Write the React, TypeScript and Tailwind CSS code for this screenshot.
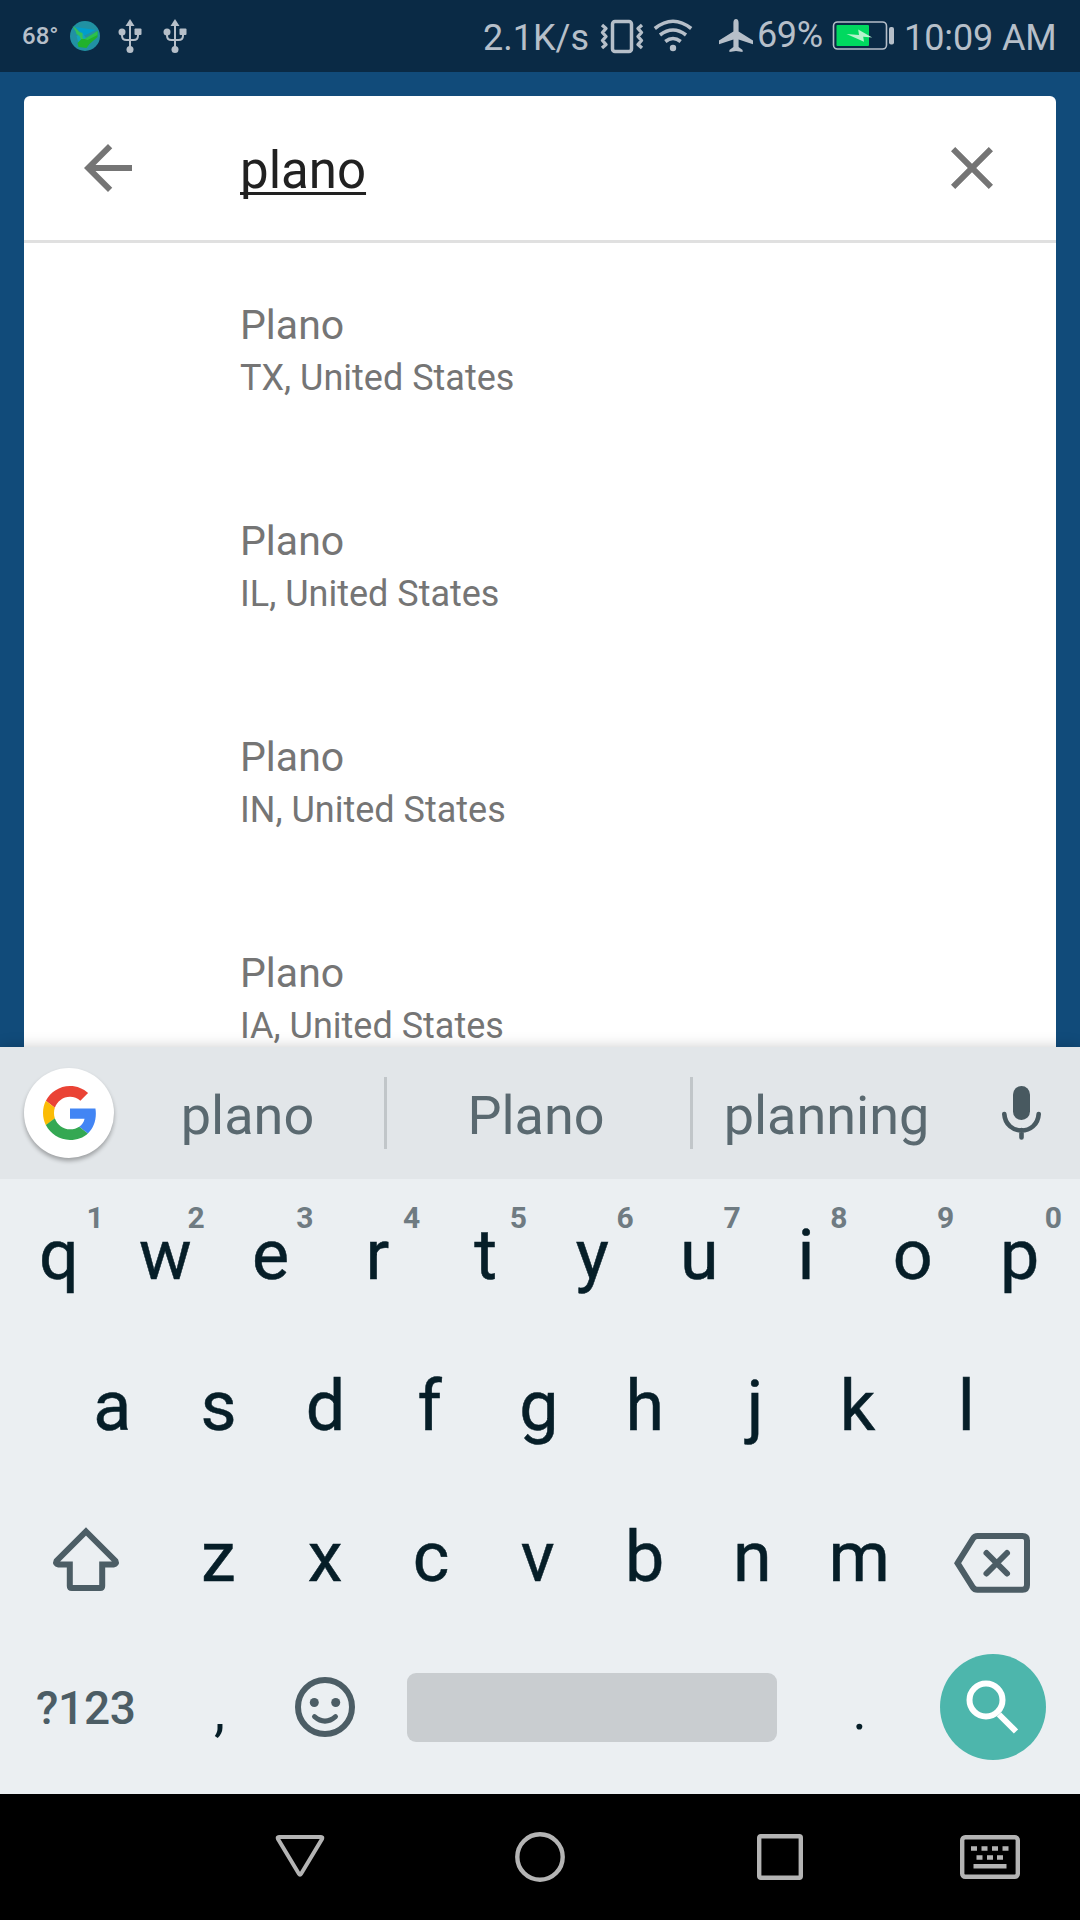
import React from "react";

const statusFg = "#b6bfc9";

function Globe() {
  return (
    <svg className="ml-[12px] h-[32px] w-[32px] shrink-0" viewBox="69.5 20 32 32">
      <circle cx="85.5" cy="36" r="15" fill="#2191a3" />
      <path d="M76 27l20 3-12 6z" fill="#009ecb" />
      <path d="M77 36l6-3 4 6-8 4z" fill="#12a5bc" />
      <path d="M73 26l3 2 4 4 3 1 0 4 2 4-3 0-2-5-3-2-1-3z" fill="#32c15c" />
      <path d="M98 31v6l-8 7-3 4-8-1-1-4 4-4 6 0z" fill="#21b22b" />
      <path d="M98 31v4l-10 5-3-1z" fill="#2cc04e" />
    </svg>
  );
}

function Usb({ className }: { className: string }) {
  return (
    <svg className={className} viewBox="0 0 24 34">
      <path d="M12 0l4.500 7h-9z" fill={statusFg} />
      <path d="M12 5v25M4 13v3.500q0 4.500 4.500 4.500h7q4.500 0 4.500-4.500v-3.500" fill="none" stroke={statusFg} strokeWidth="2" />
      <circle cx="4" cy="13" r="3.500" fill={statusFg} />
      <rect x="16.500" y="9.500" width="7" height="6.500" rx="1" fill={statusFg} />
      <circle cx="12" cy="30.500" r="3.500" fill={statusFg} />
    </svg>
  );
}

function StatusBar() {
  return (
    <div className="flex h-[72px] items-center bg-[#0a2a45] text-[#b6bfc9]">
      <span className="ml-[22px] w-[35px] text-[24px] leading-[32px] font-medium">68°</span>
      <Globe />
      <Usb className="ml-[17px] h-[34px] w-[24px]" />
      <Usb className="ml-[21px] h-[34px] w-[24px]" />
      <div className="ml-auto flex h-full items-center">
        <span className="w-[117px] pt-[3px] text-[36px] leading-[42px] whitespace-nowrap">2.1K/s</span>
        <svg className="h-[36px] w-[44px]" viewBox="601 18 44 36">
          <rect x="613.500" y="21.500" width="19" height="30" rx="2.500" fill="none" stroke={statusFg} strokeWidth="3.500" />
          <path d="M603 25l4 3.500-3.500 4 3.500 4-3.500 4 3.500 4-4 3.500M643 25l-4 3.500 3.500 4-3.500 4 3.500 4-3.500 4 4 3.500" fill="none" stroke={statusFg} strokeWidth="3.400" strokeLinejoin="round" />
        </svg>
        <svg className="ml-[8px] h-[36px] w-[42px]" viewBox="652 18 42 36">
          <g fill="none" stroke={statusFg} strokeWidth="3.600">
            <path d="M654.800 28.500q18.200-14.500 36.400 0" />
            <path d="M660 35q13-10 26 0" />
            <path d="M665.300 41.500q7.700-6 15.400 0" />
          </g>
          <circle cx="673" cy="48" r="3.200" fill={statusFg} />
        </svg>
        <svg className="ml-[24px] h-[36px] w-[36px]" viewBox="718 18 36 36">
          <path d="M736 19q2.600 0 2.600 4v8.500L753 40.500v3.700L738.600 39.500v7.500l4 3v2l-6.600-1-6.600 1v-2l4-3v-7.500L719 44.200v-3.700L733.400 31.500V23q0-4 2.600-4z" fill={statusFg} />
        </svg>
        <span className="ml-[3px] w-[67px] pb-[2px] text-[36px] leading-[42px] whitespace-nowrap tracking-[-0.4px]">69%</span>
        <svg className="ml-[8px] h-[32px] w-[64px]" viewBox="832 20 64 32">
          <rect x="833.500" y="22" width="53" height="27" rx="4" fill="none" stroke={statusFg} strokeWidth="1.600" />
          <rect x="889" y="27" width="5" height="17.500" rx="2" fill={statusFg} />
          <rect x="836.500" y="25" width="32.500" height="21" rx="1" fill="#00d95f" />
          <path d="M846.500 34l12.500 1-.8-5.500 14 8-9-.8.8 5z" fill="#b5f4cd" />
        </svg>
        <span className="ml-[8px] w-[176px] pt-[3px] text-[36px] leading-[42px] tracking-[-0.1px] whitespace-nowrap">10:09 AM</span>
      </div>
    </div>
  );
}

const results = ["TX, United States", "IL, United States", "IN, United States", "IA, United States"];

function SearchCard() {
  return (
    <div className="mx-[24px] mt-[24px] h-[951px] overflow-hidden rounded-t-[6px] bg-white">
      <div className="flex h-[147px] border-b-[3px] border-[#e0e0e0] pt-[36px]">
        <svg className="ml-[48px] h-[72px] w-[72px]" viewBox="0 0 24 24" fill="#757575">
          <path d="M20 11H7.830l5.590-5.590L12 4l-8 8 8 8 1.410-1.410L7.830 13H20v-2z" />
        </svg>
        <div className="ml-[96px] flex-1 pt-[9px] text-[51px] leading-[60px] text-[#212121] underline decoration-[3px] underline-offset-[4px] [text-decoration-skip-ink:none]">
          plano
        </div>
        <svg className="mr-[48px] h-[72px] w-[72px]" viewBox="0 0 24 24" fill="#757575">
          <path d="M19 6.410L17.590 5 12 10.590 6.410 5 5 6.410 10.590 12 5 17.590 6.410 19 12 13.410 17.590 19 19 17.590 13.410 12z" />
        </svg>
      </div>
      {results.map((place) => (
        <div key={place} className="h-[216px] pt-[58px] pl-[216px] text-[#757575]">
          <div className="text-[41px] leading-[48px]">Plano</div>
          <div className="mt-[8px] text-[36px] leading-[42px]">{place}</div>
        </div>
      ))}
    </div>
  );
}

function SuggestionStrip() {
  return (
    <div className="flex h-[132px] items-center bg-[#e2e6e9] text-[54px] leading-[64px] text-[#5a6970]">
      <div className="ml-[24px] flex h-[90px] w-[90px] items-center justify-center rounded-full bg-white pl-[1px] shadow-[0_3px_4px_rgba(0,0,0,0.3)]">
        <svg className="h-[54px] w-[54px]" viewBox="0 0 48 48">
          <path fill="#EA4335" d="M24 9.500c3.540 0 6.710 1.220 9.210 3.600l6.850-6.850C35.900 2.380 30.470 0 24 0 14.620 0 6.510 5.380 2.560 13.220l7.980 6.190C12.430 13.720 17.740 9.500 24 9.500z" />
          <path fill="#4285F4" d="M46.980 24.550c0-1.570-.15-3.090-.38-4.550H24v9.020h12.940c-.58 2.960-2.260 5.480-4.780 7.180l7.730 6c4.510-4.180 7.090-10.360 7.090-17.650z" />
          <path fill="#FBBC05" d="M10.530 28.590c-.48-1.450-.76-2.990-.76-4.590s.27-3.140.76-4.590l-7.980-6.190C.92 16.460 0 20.120 0 24c0 3.880.92 7.540 2.560 10.780l7.970-6.190z" />
          <path fill="#34A853" d="M24 48c6.480 0 11.930-2.130 15.890-5.810l-7.730-6c-2.150 1.450-4.920 2.300-8.160 2.300-6.260 0-11.570-4.220-13.470-9.910l-7.980 6.190C6.510 42.620 14.620 48 24 48z" />
        </svg>
      </div>
      <div className="w-[270px] pt-[6px] pr-[3px] text-center">plano</div>
      <div className="h-[72px] w-[3px] bg-[#c1c6c9]" />
      <div className="w-[303px] pt-[6px] pr-[5px] text-center">Plano</div>
      <div className="h-[72px] w-[3px] bg-[#c1c6c9]" />
      <div className="w-[267px] pt-[6px] text-center">planning</div>
      <svg className="ml-[42px] h-[54px] w-[39px]" viewBox="0 0 39 54">
        <rect x="11" y="0" width="17" height="34" rx="8.500" fill="#485960" />
        <path d="M2.300 28c1.500 22 33 22 34.400 0M19.500 44v7.500" fill="none" stroke="#485960" strokeWidth="4.600" strokeLinecap="round" />
      </svg>
    </div>
  );
}

/* Optical centring: right padding shifts a glyph left by half its value. */
const glyphPadding: Record<string, string> = {
  q: "pr-[1px]",
  a: "pr-[1px]",
  e: "pr-[5px]",
  r: "pr-[5px]",
  f: "pr-[7px]",
  k: "pr-[6px]",
  h: "pr-[4px]",
  b: "pr-[4px]",
  c: "pr-[4px]",
  v: "pr-[4px]",
  j: "pl-[3px]",
};

const hintOffset: Record<string, string> = {
  "1": "right-[9px]",
  "2": "right-[15px]",
  "0": "right-[12px]",
};

function Letter({ children, hint }: { children: string; hint?: string }) {
  return (
    <div className={`relative flex h-full w-[106.8px] items-center justify-center ${glyphPadding[children] ?? "pr-[2px]"}`}>
      {children}
      {hint && (
        <span className={`absolute top-[21px] text-[30px] leading-[36px] font-bold text-[#6f7b82] [-webkit-text-stroke:0px] ${hintOffset[hint] ?? "right-[13px]"}`}>
          {hint}
        </span>
      )}
    </div>
  );
}

function Keyboard() {
  return (
    <div className="h-[615px] bg-[#ebeff2] text-[70px] leading-[84px] text-[#061e28]">
      <div className="flex h-[151px] justify-center [-webkit-text-stroke:0.5px_#061e28]">
        {"qwertyuiop".split("").map((c, i) => (
          <Letter key={c} hint={String((i + 1) % 10)}>{c}</Letter>
        ))}
      </div>
      <div className="flex h-[151px] justify-center [-webkit-text-stroke:0.5px_#061e28]">
        {"asdfghjkl".split("").map((c) => (
          <Letter key={c}>{c}</Letter>
        ))}
      </div>
      <div className="flex h-[151px] items-center">
        <svg className="mt-[4px] ml-[52px] h-[66px] w-[68px]" viewBox="52 1526 68 66" fill="none" stroke="#4c5d65" strokeWidth="6">
          <path d="M86 1531.500l29.500 29.500q1.500 3-2 3.500h-11.300v21.500q0 2-2 2h-28.400q-2 0-2-2v-21.500h-11.300q-3.500-.5-2-3.500z" />
        </svg>
        <div className="ml-[46px] flex h-full [-webkit-text-stroke:0.5px_#061e28]">
          {"zxcvbnm".split("").map((c) => (
            <Letter key={c}>{c}</Letter>
          ))}
        </div>
        <svg className="ml-[40px] mt-[12px] h-[60px] w-[76px]" viewBox="0 0 76 60" fill="none" stroke="#4c5d65" strokeWidth="6">
          <path d="M3.600 30.200L19 5.500Q20.500 3 23.500 3H68.500Q73 3 73 7.500V52Q73 56.700 68.500 56.700H23.500Q20.500 56.700 19 54.500z" />
          <path d="M32.500 20l20.500 20.500M53 20L32.500 40.500" strokeLinecap="round" />
        </svg>
      </div>
      <div className="flex h-[151px] items-center pb-[2px]">
        <div className="ml-[36px] w-[130px] pt-[3px] text-[46px] leading-[54px] font-medium tracking-[-0.3px] text-[#4c5d65]">?123</div>
        <div className="w-[107px] pt-[9px] text-center text-[56px]">,</div>
        <svg className="ml-[22px] h-[60px] w-[60px]" viewBox="0 0 60 60">
          <circle cx="30" cy="30" r="27" fill="none" stroke="#4c5d65" strokeWidth="6" />
          <circle cx="19.300" cy="25.500" r="4.500" fill="#4c5d65" />
          <circle cx="40.700" cy="25.500" r="4.500" fill="#4c5d65" />
          <path d="M19.500 39.700q10.500 9 21 0" fill="none" stroke="#4c5d65" strokeWidth="5" strokeLinecap="round" />
        </svg>
        <div className="mt-[2px] ml-[52px] h-[69px] w-[370px] rounded-[9px] bg-[#c9cdd0]" />
        <div className="ml-[29px] w-[107px] pt-[9px] text-center text-[54px]">.</div>
        <div className="ml-[27px] flex h-[106px] w-[106px] items-center justify-center rounded-full bg-[#4db6ac]">
          <svg className="h-[54px] w-[54px]" viewBox="0 0 54 54" fill="none" stroke="#ffffff">
            <circle cx="20" cy="20" r="16.500" strokeWidth="6" />
            <path d="M33 34.500L50 51.500" strokeWidth="6" />
          </svg>
        </div>
      </div>
    </div>
  );
}

function NavBar() {
  return (
    <div className="flex h-[126px] items-center bg-black">
      <svg className="ml-[275px] h-[50px] w-[50px]" viewBox="0 0 50 50">
        <path d="M4 5h42q2 0 1 2L26 42q-1 1.500-2 0L3 7q-1-2 1-2z" fill="none" stroke="#b4b4b4" strokeWidth="4" />
      </svg>
      <svg className="ml-[190px] h-[50px] w-[50px]" viewBox="0 0 50 50">
        <circle cx="25" cy="25" r="22.700" fill="none" stroke="#b4b4b4" strokeWidth="4.400" />
      </svg>
      <svg className="ml-[192px] h-[46px] w-[46px]" viewBox="0 0 46 46">
        <rect x="2.200" y="2.200" width="41.600" height="41.600" rx="1.500" fill="none" stroke="#b4b4b4" strokeWidth="4.400" />
      </svg>
      <svg className="ml-[157px] h-[44px] w-[60px]" viewBox="960 1835 60 44">
        <rect x="962.200" y="1837.200" width="55.600" height="39.600" rx="3" fill="none" stroke="#b4b4b4" strokeWidth="4.400" />
        <path d="M971 1848.500h6M981.500 1848.500h6M992 1848.500h6M1002.500 1848.500h6M976.500 1857.500h6M987 1857.500h6M997 1857.500h6M973.500 1866.200h33" stroke="#b4b4b4" strokeWidth="4.600" />
      </svg>
    </div>
  );
}

export default function App() {
  return (
    <div className="h-[1920px] w-[1080px] overflow-hidden bg-[#114b7a] font-['Roboto',sans-serif]">
      <StatusBar />
      <SearchCard />
      <div className="relative shadow-[0_0_14px_rgba(0,0,0,0.2)]">
        <SuggestionStrip />
        <Keyboard />
      </div>
      <NavBar />
    </div>
  );
}
